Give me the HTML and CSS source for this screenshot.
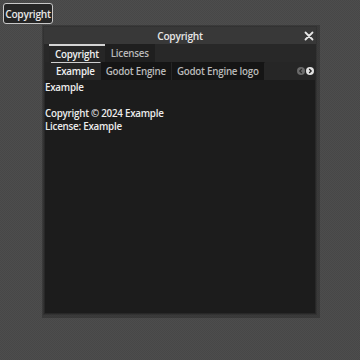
FILE: index.html
```html
<!DOCTYPE html>
<html>
<head>
<meta charset="utf-8">
<link rel="stylesheet" href="styles.css">
</head>
<body>
<button class="open-btn">Copyright</button>
<div class="window">
  <div class="titlebar">
    <span class="title">Copyright</span>
    <svg class="close" width="10" height="10" viewBox="0 0 10 10"><path d="M1.5 1.5L8.5 8.5M8.5 1.5L1.5 8.5" stroke="#e6e6e6" stroke-width="1.8" stroke-linecap="round"/></svg>
  </div>
  <div class="body">
    <div class="tabs outer-tabs">
      <div class="tab selected">Copyright</div>
      <div class="tab">Licenses</div>
    </div>
    <div class="outer-panel">
      <div class="tabs inner-tabs">
        <div class="tab selected">Example</div>
        <div class="tab">Godot Engine</div>
        <div class="tab">Godot Engine logo</div>
        <div class="spacer"></div>
        <div class="arrows">
          <svg width="8" height="8" viewBox="0 0 8 8"><circle cx="4" cy="4" r="4" fill="#6a6a6a"/><path d="M4.8 2L2.8 4L4.8 6" stroke="#2a2a2a" stroke-width="1.2" fill="none"/></svg>
          <svg width="8" height="8" viewBox="0 0 8 8"><circle cx="4" cy="4" r="4" fill="#e0e0e0"/><path d="M3.2 2L5.2 4L3.2 6" stroke="#1a1a1a" stroke-width="1.2" fill="none"/></svg>
        </div>
      </div>
      <div class="content">
        <p>Example</p>
        <p>&nbsp;</p>
        <p>Copyright © 2024 Example</p>
        <p>License: Example</p>
      </div>
    </div>
  </div>
</div>
</body>
</html>
```

FILE: styles.css
```css
html, body {
  margin: 0;
  height: 100%;
}
body {
  width: 360px;
  height: 360px;
  overflow: hidden;
  position: relative;
  background-color: #4a4a4a;
  background-image: repeating-conic-gradient(#4d4d4d 0 25%, #474747 0 50%);
  background-size: 2px 2px;
  font-family: "Open Sans", "Noto Sans", sans-serif;
  font-size: 9.8px;
  font-weight: 600;
  letter-spacing: -0.25px;
  color: #e0e0e0;
}
.open-btn {
  position: absolute;
  left: 3px;
  top: 3px;
  width: 50px;
  height: 21px;
  padding: 0;
  border: 1px solid #c8c8c8;
  border-radius: 3px;
  background: #262626;
  color: #e6e6e6;
  font-family: "Open Sans", "Noto Sans", sans-serif;
  font-size: 10.2px;
  font-weight: 600;
  letter-spacing: -0.25px;
}
.window {
  position: absolute;
  left: 44px;
  top: 27px;
  width: 272px;
  height: 287px;
  display: flex;
  flex-direction: column;
  box-shadow: 1px 1px 0 3px rgba(30,30,30,0.35), 0 0 0 1px rgba(30,30,30,0.25);
}
.titlebar {
  height: 17px;
  background: #383838;
  display: flex;
  align-items: center;
  justify-content: center;
  position: relative;
}
.title {
  font-size: 10.2px;
  color: #e6e6e6;
}
.close {
  position: absolute;
  right: 2px;
  top: 4px;
}
.body {
  flex: 1;
  background: #282828;
  display: flex;
  flex-direction: column;
}
.tabs {
  display: flex;
  align-items: stretch;
}
.outer-tabs {
  height: 18px;
  padding-left: 5px;
}
.tab {
  padding: 0 5px;
  display: flex;
  align-items: center;
  color: #bababa;
  background: #1f1f1f;
  border-top: 1px solid transparent;
}
.outer-tabs .tab {
  padding: 0 6px;
}
.tab.selected {
  color: #f0f0f0;
  background: #262626;
  border-top: 2px solid #d4d4d4;
}
.outer-panel {
  flex: 1;
  background: #262626;
  display: flex;
  flex-direction: column;
  margin: 0 1px 1px 1px;
}
.inner-tabs {
  height: 18px;
  padding-left: 6px;
}
.inner-tabs .tab {
  background: #151515;
  border-right: 1px solid #262626;
}
.inner-tabs .tab.selected {
  background: #262626;
  border-top: 1px solid #d0d0d0;
}
.spacer {
  flex: 1;
}
.arrows {
  display: flex;
  align-items: center;
  gap: 1px;
  padding-right: 1px;
}
.content {
  flex: 1;
  background: #1c1c1c;
  padding-top: 1px;
}
.content p {
  margin: 0;
  line-height: 13px;
  color: #ececec;
}
```
